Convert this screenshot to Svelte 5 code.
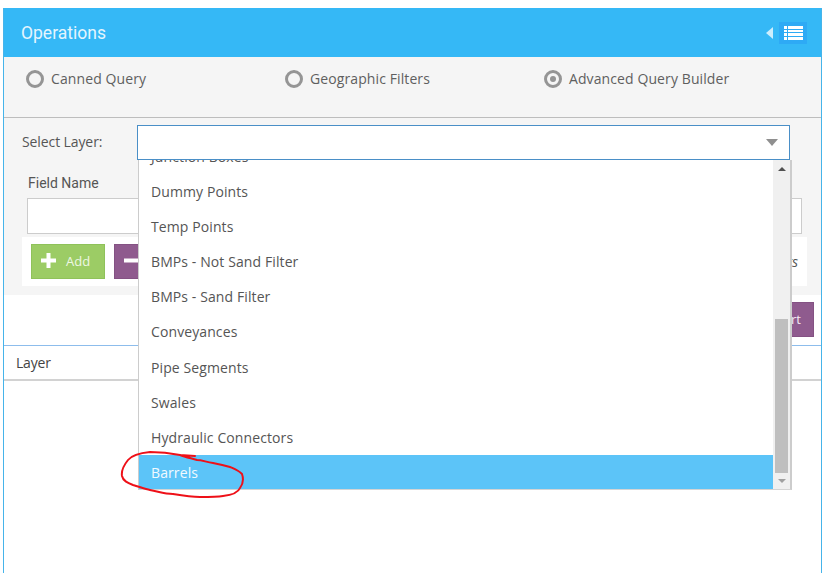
<script>
  const items = ['Junction Boxes', 'Dummy Points', 'Temp Points', 'BMPs - Not Sand Filter', 'BMPs - Sand Filter', 'Conveyances', 'Pipe Segments', 'Swales', 'Hydraulic Connectors'];
</script>

<div class="panel">
  <header class="head">
    <span class="title">Operations</span>
    <span class="arrow"></span>
    <span class="listbtn">
      <svg width="19" height="14" viewBox="0 0 19 14"><path fill="#fff" d="M0 0h3v3H0zM4 0h15v3H4zM0 4h3v2H0zM4 4h15v2H4zM0 7h3v3H0zM4 7h15v3H4zM0 11h3v3H0zM4 11h15v3H4z"/></svg>
    </span>
  </header>
  <div class="radios">
    <label class="radio r1"><i class="dot"></i>Canned Query</label>
    <label class="radio r2"><i class="dot"></i>Geographic Filters</label>
    <label class="radio"><i class="dot on"></i>Advanced Query Builder</label>
  </div>
  <section class="form">
    <div class="layer-row">
      <span class="layer-label">Select Layer:</span>
      <div class="select"><span class="caret"></span></div>
    </div>
    <div class="field-label">Field Name</div>
    <div class="input"></div>
    <div class="actions">
      <button class="btn add"><svg width="15" height="15" viewBox="0 0 15 15"><path fill="#fff" d="M5.500 0h4v5.500H15v4H9.500V15h-4V9.500H0v-4h5.500z"/></svg><span>Add</span></button>
      <button class="btn remove"><svg width="15" height="15" viewBox="0 0 15 15"><path fill="#fff" d="M0 5.500h15v4H0z"/></svg></button>
      <em class="hint">Filters</em>
    </div>
  </section>
  <div class="export-row"><button class="btn export">Export</button></div>
  <div class="table-head">Layer</div>

  <div class="dropdown">
    <ul class="options">
      {#each items as item}<li>{item}</li>{/each}
      <li class="selected">Barrels</li>
    </ul>
    <div class="scrollbar">
      <span class="up"></span>
      <div class="track"><div class="thumb"></div></div>
      <span class="down"></span>
    </div>
  </div>

  <svg class="scribble" width="130" height="56" viewBox="0 0 130 56" fill="none">
    <path d="M75 6L60 5C50 3 40 2 30 2C20 3 12 5 8 10C4 15 1 20 2 26C3 31 8 33 13 35C20 37 25 39 30 40C40 42 45 44 53 44C65 46 72 47 80 47C90 47 97 47 103 46C112 45 118 43 120 38C123 34 124 30 122 24C118 20 115 19 110 17C103 15 98 14 93 13C86 12 82 10 77 10C70 8 65 7 60 5" stroke="#ee1018" stroke-width="2" stroke-linecap="round" stroke-linejoin="round"/>
  </svg>
</div>

<style>
  :global(body) {
    margin: 0;
    background: #fff;
    font-family: "Open Sans", "Liberation Sans", sans-serif;
    overflow: hidden;
  }
  .panel {
    position: relative;
    box-sizing: border-box;
    width: 819px;
    height: 565px;
    margin: 8px 0 0 3px;
    border-left: 1px solid #46b4ea;
    border-right: 1px solid #46b4ea;
    overflow: hidden;
  }
  .head {
    height: 49px;
    margin: 0 -1px;
    background: #35b8f6;
    display: flex;
    align-items: center;
    padding: 0 15px 0 18px;
  }
  .title {
    font-family: Roboto, sans-serif;
    font-size: 17.5px;
    color: #e4f5fe;
    flex: 1;
  }
  .arrow {
    border-right: 7px solid #cdeefd;
    border-top: 6px solid transparent;
    border-bottom: 6px solid transparent;
    margin-right: 6px;
  }
  .listbtn {
    width: 28px;
    height: 22px;
    background: #2eaaf5;
    display: flex;
    align-items: center;
    justify-content: center;
  }
  .radios {
    height: 61px;
    box-sizing: border-box;
    background: #f5f5f5;
    border-bottom: 1px solid #bdbdbd;
    display: flex;
    padding: 13px 0 0 22px;
    font-size: 14px;
    color: #5f5f5f;
  }
  .radio {
    display: flex;
    align-items: flex-start;
    line-height: 18px;
    letter-spacing: 0.1px;
  }
  .r1 { width: 259px; }
  .r2 { width: 259px; }
  .dot {
    box-sizing: border-box;
    width: 18px;
    height: 18px;
    border: 3px solid #959595;
    border-radius: 50%;
    margin-right: 7px;
    background: #f5f5f5;
    display: flex;
    align-items: center;
    justify-content: center;
  }
  .dot.on::after {
    content: "";
    width: 6px;
    height: 6px;
    border-radius: 50%;
    background: #959595;
  }
  .form {
    height: 177px;
    box-sizing: border-box;
    background: #f5f5f5;
    padding: 7px 18px 0 18px;
  }
  .layer-row {
    display: flex;
    align-items: center;
    height: 35px;
  }
  .layer-label {
    width: 115px;
    padding-bottom: 2px;
    font-size: 14px;
    color: #555;
    letter-spacing: -0.1px;
  }
  .select {
    box-sizing: border-box;
    width: 653px;
    height: 35px;
    background: #fff;
    border: 1px solid #4a8fc7;
    display: flex;
    align-items: center;
    justify-content: flex-end;
    padding-right: 11px;
  }
  .caret {
    border-top: 7px solid #8f8f8f;
    border-left: 6px solid transparent;
    border-right: 6px solid transparent;
  }
  .field-label {
    margin: 14px 0 0 6px;
    height: 24px;
    line-height: 19px;
    font-family: Roboto, sans-serif;
    font-size: 14px;
    color: #555;
  }
  .input {
    box-sizing: border-box;
    width: 775px;
    height: 36px;
    margin: 0 0 0 5px;
    background: #fff;
    border: 1px solid #ccc;
  }
  .actions {
    box-sizing: border-box;
    width: 785px;
    height: 49px;
    margin-top: 3px;
    background: #fff;
    display: flex;
    align-items: center;
    padding: 0 9px;
    gap: 9px;
  }
  .btn {
    box-sizing: border-box;
    height: 35px;
    border: 1px solid;
    padding: 0 0 2px;
    font-family: "Open Sans", sans-serif;
    font-size: 13px;
    color: #fff;
    display: flex;
    align-items: center;
  }
  .add {
    width: 74px;
    background: #9ccc65;
    border-color: #8fc25a;
    color: #eef7e4;
    padding-left: 9px;
    gap: 10px;
  }
  .remove {
    width: 60px;
    background: #8f5b8e;
    border-color: #845283;
    padding-left: 9px;
  }
  .hint {
    margin-left: auto;
    font-size: 14px;
    color: #555;
  }
  .export-row {
    height: 50px;
    box-sizing: border-box;
    padding: 7px 7px 0 0;
    display: flex;
    justify-content: flex-end;
    background: #fff;
  }
  .export {
    width: 70px;
    background: #8f5b8e;
    border-color: #845283;
    justify-content: center;
    padding-left: 4px;
    color: #f3e9f3;
  }
  .table-head {
    box-sizing: border-box;
    height: 36px;
    border-top: 1px solid #8dbdec;
    border-bottom: 2px solid #d2d2d2;
    padding-left: 12px;
    line-height: 33px;
    font-size: 14px;
    letter-spacing: -0.2px;
    color: #444;
    background: #fff;
  }
  .dropdown {
    position: absolute;
    left: 134px;
    top: 152px;
    box-sizing: border-box;
    width: 654px;
    height: 330px;
    background: #fff;
    border-left: 1px solid #ccc;
    border-right: 2px solid #ccc;
    border-bottom: 1px solid #d4d4d4;
    display: flex;
    overflow: hidden;
  }
  .options {
    list-style: none;
    margin: -21px 0 0;
    padding: 0;
    flex: 1;
    font-size: 14px;
    color: #555;
  }
  .options li {
    box-sizing: border-box;
    height: 35.1px;
    line-height: 35px;
    padding-left: 12px;
    letter-spacing: 0.1px;
  }
  .options li.selected {
    height: 34px;
    background: #5cc4f8;
    color: #f2faff;
  }
  .scrollbar {
    width: 17px;
    background: #f0f0f0;
    display: flex;
    flex-direction: column;
    align-items: center;
  }
  .up, .down {
    display: block;
    flex: none;
    border-left: 4px solid transparent;
    border-right: 4px solid transparent;
  }
  .up {
    border-bottom: 4px solid #505050;
    margin: 7px 0 5px;
  }
  .down {
    border-top: 4px solid #a0a0a0;
    margin: 6px 0 6px;
  }
  .track {
    flex: 1;
    width: 13px;
    display: flex;
    flex-direction: column;
    justify-content: flex-end;
  }
  .thumb {
    height: 154px;
    background: #bfbfbf;
  }
  .scribble {
    position: absolute;
    left: 116px;
    top: 442px;
  }
</style>
